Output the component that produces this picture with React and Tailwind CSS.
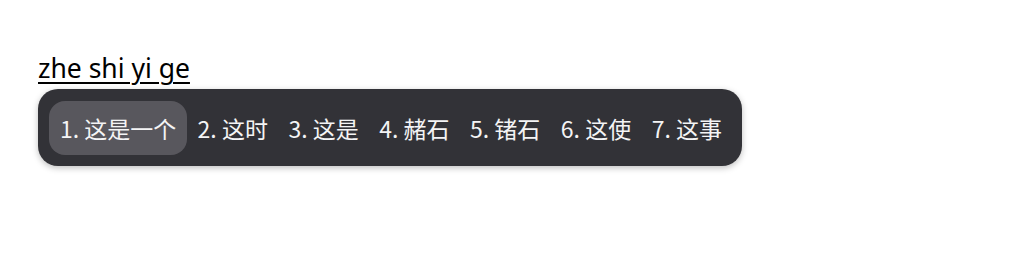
const candidates = ["这是一个", "这时", "这是", "赭石", "锗石", "这使", "这事"];

export default function App() {
  return (
    <div className="min-h-[269px] bg-white pl-[38px] pt-[53px]" style={{ fontFamily: '"Noto Sans", "Noto Sans CJK SC", sans-serif' }}>
      <div className="text-[26.5px] leading-[30px] text-black underline decoration-2 underline-offset-[4px]">zhe shi yi ge</div>
      <div
        className="mt-[6px] inline-flex items-center rounded-[20px] bg-[#323237] pl-[11px] pr-[10px] pt-[12px] pb-[11px] text-[#f4f4f5] shadow-[0_2px_6px_rgba(0,0,0,0.25)]"
        style={{ fontFamily: '"Noto Sans CJK SC", sans-serif' }}
      >
        {candidates.map((word, i) => (
          <div
            key={word}
            className={
              i === 0
                ? "rounded-[16px] bg-[#58575d] px-[11px] py-[12px] text-[23px] leading-[30px]"
                : "rounded-[16px] px-[10.25px] py-[12px] text-[23px] leading-[30px]"
            }
          >
            {i + 1}. {word}
          </div>
        ))}
      </div>
    </div>
  );
}
